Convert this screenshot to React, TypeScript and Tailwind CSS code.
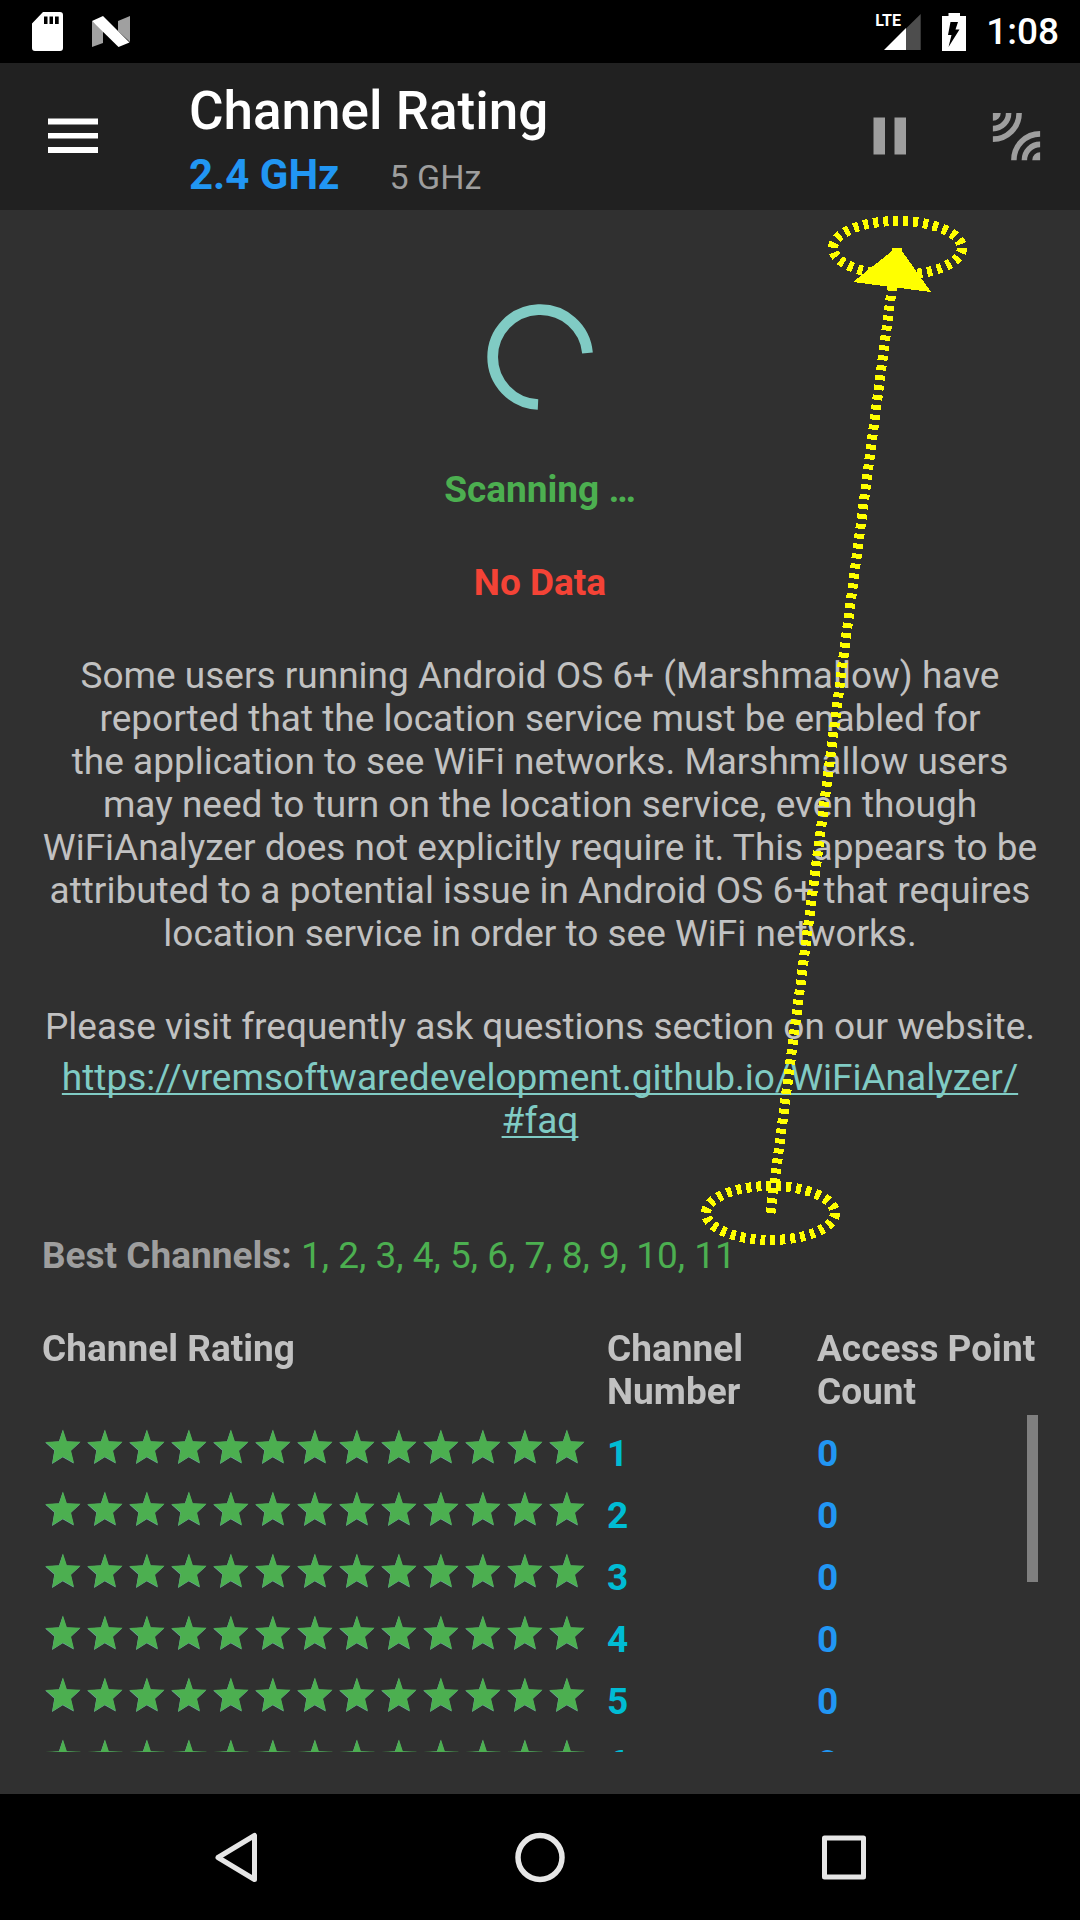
import React from "react";

const CHANNELS = [1, 2, 3, 4, 5, 6, 7, 8, 9, 10, 11];
const STAR_COUNT = 13;
const STAR = "21,3.5 24.8,15.2 38.5,15.8 29,24.6 32,37 21,30.8 10.3,37.6 12.6,24 3.500,16 17.200,15.200";

function StatusBar() {
  return (
    <div className="flex h-[63px] shrink-0 items-center bg-black pl-8 pr-[21px] text-white">
      <svg className="h-[39px] w-[31px]" viewBox="0 0 31 39" aria-label="SD card">
        <path
          fill="#fff"
          fillRule="evenodd"
          d="M11 0H28Q31 0 31 3V36Q31 39 28 39H3Q0 39 0 36V11.500ZM12 4.500V12H15.500V4.500ZM17.500 4.500V12H21V4.500ZM23 4.500V12H26.700V4.500Z"
        />
      </svg>
      <svg className="ml-[29px] h-[31px] w-[38px]" viewBox="0 0 38 31" aria-label="Android Nougat">
        <path fill="#a0a0a0" d="M0 5 11 14V27L0 31ZM26 5 38 0V26L26 15Z" />
        <path fill="#fff" d="M0 5 11 0 37.500 26.500 26.500 31Z" />
      </svg>
      <div className="relative ml-auto h-[38px] w-[46px]">
        <span className="absolute left-0 top-0 text-[16px] font-bold leading-[16px]">LTE</span>
        <svg className="h-[38px] w-[46px]" viewBox="0 0 46 38" aria-label="Signal">
          <path fill="#4d4d4d" d="M31 15.500 45.700 1V37H31Z" />
          <path fill="#fff" d="M9 37 31 15V37Z" />
        </svg>
      </div>
      <svg className="ml-[21px] h-[38px] w-6" viewBox="0 0 24 38" aria-label="Battery charging">
        <path fill="#fff" d="M6.500 0H18V3H24V38H0V3H6.500Z" />
        <path fill="#000" d="M8.500 9H16L13.500 16.500H17.500L6.500 34L9.500 22H6Z" />
      </svg>
      <span className="ml-5 text-[37px] font-medium leading-[43px]">1:08</span>
    </div>
  );
}

function AppBar() {
  return (
    <header className="flex shrink-0 items-center bg-[#212121] pl-[42px] pr-8">
      <button type="button" aria-label="Open menu" className="size-[63px]">
        <svg viewBox="0 0 63 63" fill="#fff">
          <path d="M6 13.500H56V19.500H6ZM6 28H56V33.500H6ZM6 42H56V48H6Z" />
        </svg>
      </button>
      <div className="ml-[84px] pb-[11px] pt-[18px]">
        <h1 className="text-[53px] font-medium leading-[60px] text-white">Channel Rating</h1>
        <div className="mt-[10px] flex items-baseline gap-[50px]">
          <button type="button" className="text-[42px] font-bold leading-[48px] text-[#2196f3]">
            2.4 GHz
          </button>
          <button type="button" className="text-[34px] leading-[40px] text-[#9e9e9e]">
            5 GHz
          </button>
        </div>
      </div>
      <button type="button" aria-label="Pause scanning" className="ml-auto size-[63px]">
        <svg viewBox="0 0 63 63" fill="#9e9e9e">
          <path d="M15.500 12.500H27V49.500H15.500ZM36.500 12.500H48V49.500H36.500Z" />
        </svg>
      </button>
      <button type="button" aria-label="Wi-Fi band" className="ml-16 size-[63px]">
        <svg viewBox="0 0 24 24" fill="none" stroke="#9e9e9e" strokeWidth="2.100">
          <path d="M9 3A6 6 0 0 1 3 9M13 3A10 10 0 0 1 3 13M15 21A6 6 0 0 1 21 15M11 21A10 10 0 0 1 21 11" />
          <path fill="#9e9e9e" stroke="none" d="M3 3H6A3 3 0 0 1 3 6ZM21 21H18A3 3 0 0 1 21 18Z" />
        </svg>
      </button>
    </header>
  );
}

function Stars() {
  return (
    <div className="flex" role="img" aria-label={`${STAR_COUNT} stars`}>
      {Array.from({ length: STAR_COUNT }, (_, i) => (
        <svg key={i} className="size-[42px] shrink-0" viewBox="0 0 42 42">
          <polygon points={STAR} fill="#80cbc4" opacity="0.8" transform="translate(-0.3 0.4)" />
          <polygon points={STAR} fill="#4caf50" />
        </svg>
      ))}
    </div>
  );
}

function RatingTable() {
  return (
    <div className="relative mt-[50px] min-h-0 flex-1">
      <div className="h-full overflow-y-auto [scrollbar-width:none]">
        <table className="w-full table-fixed border-collapse text-left">
          <thead className="sticky top-0 z-10 bg-[#303030]">
            <tr className="h-[88px] align-top text-[#c1c1c1]">
              <th className="w-[565px] p-0 font-bold">Channel Rating</th>
              <th className="w-[210px] p-0 pr-10 font-bold">Channel Number</th>
              <th className="p-0 font-bold">Access Point Count</th>
            </tr>
          </thead>
          <tbody>
            {CHANNELS.map((channel) => (
              <tr key={channel} className="h-[62px] align-top font-bold">
                <td className="p-0 pt-[11px]">
                  <Stars />
                </td>
                <td className="p-0 pt-[17px] text-[#00bcd4]">{channel}</td>
                <td className="p-0 pt-[17px] text-[#2196f3]">0</td>
              </tr>
            ))}
          </tbody>
        </table>
      </div>
      <div className="absolute right-0 top-[88px] z-20 h-[167px] w-[11px] bg-[#7f7f7f]" />
    </div>
  );
}

function GestureOverlay() {
  return (
    <svg
      className="pointer-events-none absolute left-[690px] top-0 z-30 h-[1050px] w-[290px]"
      viewBox="690 210 290 1050"
      fill="none"
      stroke="#ff0"
      strokeWidth="10"
      strokeDasharray="5 5"
      shapeRendering="crispEdges"
      aria-hidden="true"
    >
      <ellipse cx="897.500" cy="248" rx="64.500" ry="27" />
      <ellipse cx="770.500" cy="1213" rx="64.500" ry="27" />
      <path d="M770.500 1213 897 249" />
      <path d="M892 248H902V251L931 292 853 282 892 251Z" fill="#ff0" stroke="none" />
    </svg>
  );
}

function NavigationBar() {
  return (
    <nav className="grid h-[126px] shrink-0 grid-cols-3 place-items-center bg-black px-[84px]">
      <button type="button" aria-label="Back" className="size-[63px]">
        <svg viewBox="0 0 63 63" fill="none" stroke="#e6e6e6" strokeWidth="5" strokeLinejoin="round">
          <path d="M49.500 9.500V53.500L13 31.500Z" />
        </svg>
      </button>
      <button type="button" aria-label="Home" className="size-[63px]">
        <svg viewBox="0 0 63 63" fill="none" stroke="#e6e6e6" strokeWidth="5.500">
          <circle cx="31" cy="31.500" r="22" />
        </svg>
      </button>
      <button type="button" aria-label="Recent apps" className="size-[63px]">
        <svg viewBox="0 0 63 63" fill="none" stroke="#e6e6e6" strokeWidth="5" strokeLinejoin="round">
          <path d="M11.500 12H50.500V51H11.500Z" />
        </svg>
      </button>
    </nav>
  );
}

export default function App() {
  return (
    <div className="flex h-screen flex-col bg-[#303030] font-['Roboto',sans-serif]">
      <StatusBar />
      <AppBar />
      <main className="relative flex min-h-0 flex-1 flex-col px-[42px] pb-[42px] pt-[84px] text-[37px] leading-[43px] text-[#c1c1c1]">
        <svg
          className="size-[126px] shrink-0 self-center"
          viewBox="0 0 126 126"
          fill="none"
          stroke="#80cbc4"
          strokeWidth="10.700"
          role="img"
          aria-label="Loading"
        >
          <path d="M61 110.500A47.500 47.500 0 1 1 110.500 59" />
        </svg>
        <p className="mt-12 text-center font-bold text-[#4caf50]">Scanning …</p>
        <p className="mt-[50px] text-center font-bold text-[#f44336]">No Data</p>
        <p className="mt-[50px] text-center">
          Some users running Android OS 6+ (Marshmallow) have reported that the location service must be
          enabled for
          <br />
          the application to see WiFi networks. Marshmallow users may need to turn on the location
          service, even though WiFiAnalyzer does not explicitly require it. This appears to be
          attributed to a potential issue in Android OS 6+ that requires location service in order to
          see WiFi networks.
        </p>
        <p className="mt-[50px] text-center">
          Please visit frequently ask questions section on our website.
        </p>
        <a
          href="https://vremsoftwaredevelopment.github.io/WiFiAnalyzer/#faq"
          className="mt-2 text-center text-[#80cbc4] underline decoration-2 underline-offset-[3px] [text-decoration-skip-ink:none]"
        >
          https://vremsoftwaredevelopment.github.io/WiFiAnalyzer/
          <wbr />
          #faq
        </a>
        <p className="mt-[92px] text-[#4caf50]">
          <strong className="font-bold text-[#9e9e9e]">Best Channels:</strong> {CHANNELS.join(", ")}
        </p>
        <RatingTable />
        <GestureOverlay />
      </main>
      <NavigationBar />
    </div>
  );
}
